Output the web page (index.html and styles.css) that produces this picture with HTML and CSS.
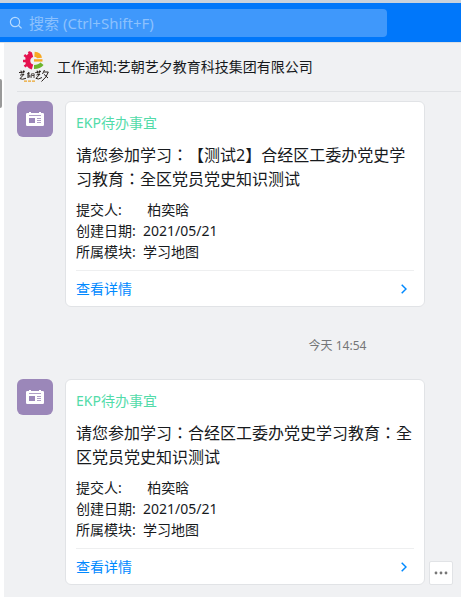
FILE: index.html
```html
<!DOCTYPE html>
<html lang="zh-CN">
<head>
    <meta charset="UTF-8">
    <meta name="viewport" content="width=device-width, initial-scale=1.0">
    <title>工作通知</title>
    <link rel="stylesheet" href="styles.css">
</head>
<body>

<div class="topbar">
    <div class="search">
        <svg class="search-icon" width="14" height="14" viewBox="0 0 14 14" fill="none" stroke="currentColor" stroke-width="1.2">
            <circle cx="6" cy="6" r="4.6"/>
            <path d="M9.3 9.3L12.6 12.4"/>
        </svg>
        <input type="text" class="search-input" placeholder="搜索 (Ctrl+Shift+F)" aria-label="搜索">
    </div>
</div>

<div class="main">
    <div class="sidebar">
        <div class="scroll-thumb"></div>
    </div>

    <div class="chat">
        <div class="chat-header">
            <svg class="logo" width="32" height="34" viewBox="0 0 32 34">
                <g fill="none">
                    <path d="M14.5 4.5A6.5 6.5 0 0 0 14.5 17" stroke="#e5124f" stroke-width="5"/>
                    <path d="M11 1.5L13 6M6.3 5L10 8M5 11H9M6.5 16.5L10 14" stroke="#e5124f" stroke-width="2.6"/>
                    <path d="M16.5 4.2Q21 4.5 21.5 8" stroke="#f7a823" stroke-width="5"/>
                    <path d="M16 10.4H24.5" stroke="#f7a823" stroke-width="2.4"/>
                    <path d="M24 13.8Q21.5 17 16 17" stroke="#6cb52d" stroke-width="4"/>
                </g>
                <g fill="none" stroke="#29211d" stroke-width="1">
                    <path d="M1 22.6L7 21.7M3 20.6L3.6 23.5M5.8 20.3L5 23.5M2 25.2L6 24.3L2 28.6Q4 30 8 28.3"/>
                    <path d="M9 23.5L12 23.1M10.6 22L10 28M9 25H11.8V27H9.2M13.5 23.5L13 28M14 23.8H16.2L16 28M13.8 25.5H16" stroke-width="0.8"/>
                    <path d="M17.3 22.6L23 21.5M19.2 20.6L19.8 23.5M21.8 20.3L21 23.5M18.5 25L22 24.1L18 28.4Q20 30 24 27.5"/>
                    <path d="M26.5 20L24.5 24M26 22H30.3Q29 27 23.5 31.5M26 24.3L30 28"/>
                </g>
                <path d="M6 31.2H18" stroke="#eba52d" stroke-width="1.3" stroke-dasharray="3 1"/>
            </svg>
            <span class="chat-title">工作通知:艺朝艺夕教育科技集团有限公司</span>
        </div>

        <div class="message">
            <div class="avatar">
                <svg width="18" height="14" viewBox="0 0 18 14">
                    <path d="M1.2 1H3V0H5V1H13V0H15V1H16.8Q18 1 18 2.2V12.8Q18 14 16.8 14H1.2Q0 14 0 12.8V2.2Q0 1 1.2 1Z" fill="#fff"/>
                    <path d="M3 3.5H15M11 6.5H15M11 8.5H15M11 10.5H15" stroke="#9b87b9" stroke-width="0.8"/>
                    <path d="M3 6H9V11H3Z" fill="#9b87b9"/>
                </svg>
            </div>
            <div class="card">
                <div class="card-type">EKP待办事宜</div>
                <div class="card-title">请您参加学习：【测试2】合经区工委办党史学习教育：全区党员党史知识测试</div>
                <div class="card-info">
                    <div>提交人:       柏奕晗</div>
                    <div>创建日期:  2021/05/21</div>
                    <div>所属模块:  学习地图</div>
                </div>
                <a class="card-link" href="#">
                    查看详情
                    <svg width="6" height="10" viewBox="0 0 6 10" fill="none" stroke="currentColor" stroke-width="1.5">
                        <path d="M0.7 0.7L5 5L0.7 9.3"/>
                    </svg>
                </a>
            </div>
        </div>

        <div class="time">今天 14:54</div>

        <div class="message">
            <div class="avatar">
                <svg width="18" height="14" viewBox="0 0 18 14">
                    <path d="M1.2 1H3V0H5V1H13V0H15V1H16.8Q18 1 18 2.2V12.8Q18 14 16.8 14H1.2Q0 14 0 12.8V2.2Q0 1 1.2 1Z" fill="#fff"/>
                    <path d="M3 3.5H15M11 6.5H15M11 8.5H15M11 10.5H15" stroke="#9b87b9" stroke-width="0.8"/>
                    <path d="M3 6H9V11H3Z" fill="#9b87b9"/>
                </svg>
            </div>
            <div class="card">
                <div class="card-type">EKP待办事宜</div>
                <div class="card-title">请您参加学习：合经区工委办党史学习教育：全区党员党史知识测试</div>
                <div class="card-info">
                    <div>提交人:       柏奕晗</div>
                    <div>创建日期:  2021/05/21</div>
                    <div>所属模块:  学习地图</div>
                </div>
                <a class="card-link" href="#">
                    查看详情
                    <svg width="6" height="10" viewBox="0 0 6 10" fill="none" stroke="currentColor" stroke-width="1.5">
                        <path d="M0.7 0.7L5 5L0.7 9.3"/>
                    </svg>
                </a>
            </div>
            <button type="button" class="more" aria-label="更多">
                <svg width="14" height="4" viewBox="0 0 14 4" fill="#777">
                    <circle cx="2" cy="2" r="1.4"/>
                    <circle cx="7" cy="2" r="1.4"/>
                    <circle cx="12" cy="2" r="1.4"/>
                </svg>
            </button>
        </div>
    </div>
</div>

</body>
</html>
```
FILE: styles.css
```css
* {
    box-sizing: border-box;
}
body {
    margin: 0;
    min-height: 100vh;
    display: flex;
    flex-direction: column;
    background: #f0f1f3;
    color: #171a1d;
    font-family: "Noto Sans", "Noto Sans CJK SC", sans-serif;
    font-size: 14px;
}
.topbar {
    background: #0077fa;
    border-top: 3px solid #c8d2dd;
    border-bottom: 1px solid #dcdfe3;
    padding: 6px 74px 5px 0;
}
.search {
    display: flex;
    align-items: center;
    gap: 6px;
    height: 28px;
    padding-left: 9px;
    background: #3f98fb;
    border-radius: 0 4px 4px 0;
    color: #b7dbff;
}
.search-input {
    flex: 1;
    min-width: 0;
    padding: 0;
    border: none;
    outline: none;
    background: transparent;
    color: #fff;
    font-family: inherit;
    font-size: 15px;
    line-height: 20px;
}
.search-input::placeholder {
    color: #8cc1fd;
}
.main {
    flex: 1;
    display: flex;
}
.sidebar {
    width: 4px;
    padding-top: 36px;
    background: #fff;
}
.scroll-thumb {
    width: 2px;
    height: 29px;
    background: #999;
    border-radius: 0 2px 2px 0;
}
.chat {
    flex: 1;
    min-width: 0;
    padding-left: 13px;
}
.chat-header {
    display: flex;
    align-items: center;
    gap: 7px;
    height: 49px;
    padding-left: 1px;
    border-bottom: 1px solid #e0e2e5;
    margin-bottom: 9px;
}
.chat-title {
    line-height: 20px;
}
.message {
    display: flex;
    padding-right: 8px;
}
.avatar {
    display: flex;
    align-items: center;
    justify-content: center;
    flex: none;
    width: 36px;
    height: 36px;
    margin-right: 12px;
    background: #9b87b9;
    border-radius: 6px;
}
.card {
    flex: 0 1 360px;
    padding: 11px 10px 0;
    background: #fff;
    border: 1px solid #e1e3e6;
    border-radius: 6px;
}
.card-type {
    line-height: 20px;
    color: #52dba9;
}
/* TC font without locl keeps the full-width colon centered */
.card-title {
    margin-top: 10px;
    font-family: "Noto Sans", "Noto Sans CJK TC", sans-serif;
    font-feature-settings: "locl" 0;
    font-size: 16px;
    line-height: 24px;
    text-spacing-trim: space-all;
}
.card-info {
    margin-top: 8px;
    line-height: 21px;
    white-space: pre-wrap;
    display: flex;
    flex-direction: column;
}
.card-link {
    display: flex;
    align-items: center;
    justify-content: space-between;
    margin-top: 8px;
    padding-right: 7px;
    border-top: 1px solid #eeeff0;
    line-height: 35px;
    color: #0089ff;
    text-decoration: none;
}
.time {
    padding-left: 197px;
    margin: 29px 0 23px;
    font-size: 12px;
    line-height: 20px;
    text-align: center;
    color: #747677;
}
.more {
    display: flex;
    align-items: center;
    justify-content: center;
    align-self: flex-end;
    flex: none;
    width: 24px;
    height: 24px;
    margin-left: 4px;
    padding: 0;
    background: #fff;
    border: 1px solid #e1e3e6;
    border-radius: 2px;
}
```
